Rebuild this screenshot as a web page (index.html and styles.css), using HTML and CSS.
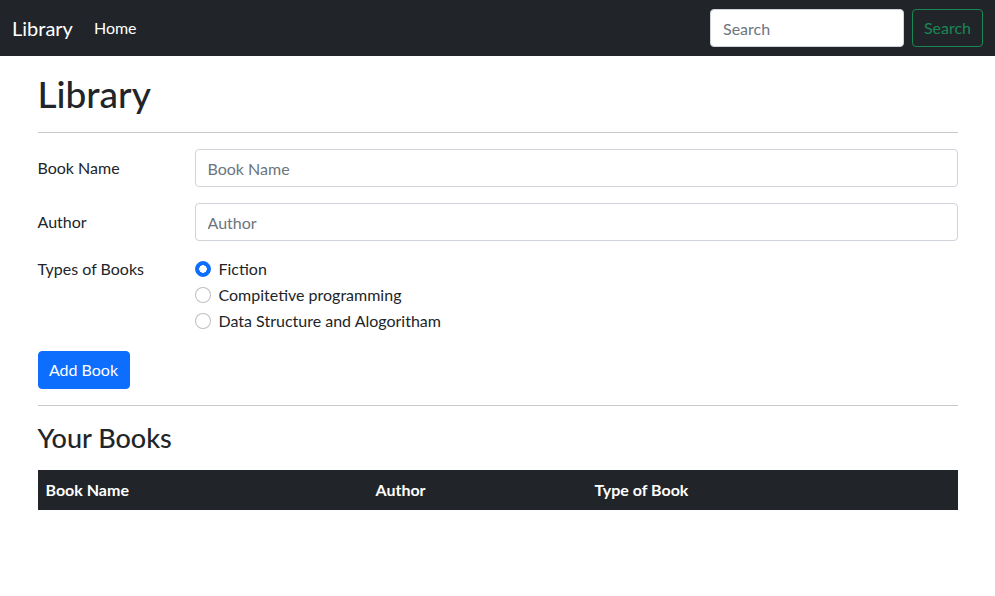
FILE: index.html
```html
<!DOCTYPE html>
<html lang="en">
<head>
<meta charset="utf-8">
<title>Library</title>
<link rel="stylesheet" href="styles.css">
</head>
<body>
<nav class="navbar">
  <div class="nav-left">
    <a class="brand" href="#">Library</a>
    <a class="nav-link" href="#">Home</a>
  </div>
  <form class="nav-search">
    <input class="search-input" type="search" placeholder="Search">
    <button class="btn-outline-success" type="button">Search</button>
  </form>
</nav>

<main class="container">
  <h1 class="title">Library</h1>
  <hr class="divider">
  <form class="book-form">
    <div class="form-row">
      <label class="form-label" for="bookName">Book Name</label>
      <div class="form-field"><input id="bookName" class="form-control" type="text" placeholder="Book Name"></div>
    </div>
    <div class="form-row">
      <label class="form-label" for="author">Author</label>
      <div class="form-field"><input id="author" class="form-control" type="text" placeholder="Author"></div>
    </div>
    <div class="form-row radios-row">
      <div class="form-label legend">Types of Books</div>
      <div class="form-field">
        <label class="form-check"><input class="radio" type="radio" name="type" checked><span>Fiction</span></label>
        <label class="form-check"><input class="radio" type="radio" name="type"><span>Compitetive programming</span></label>
        <label class="form-check"><input class="radio" type="radio" name="type"><span>Data Structure and Alogoritham</span></label>
      </div>
    </div>
    <button class="btn-primary" type="button">Add Book</button>
  </form>
  <hr class="divider">
  <h2 class="subtitle">Your Books</h2>
  <table class="books-table">
    <thead>
      <tr>
        <th class="col-name">Book Name</th>
        <th class="col-author">Author</th>
        <th class="col-type">Type of Book</th>
      </tr>
    </thead>
    <tbody></tbody>
  </table>
</main>
</body>
</html>
```

FILE: styles.css
```css
* { box-sizing: border-box; }

html, body {
  margin: 0;
  padding: 0;
  background: #fff;
}

body {
  font-family: Lato, "Noto Sans", "Liberation Sans", sans-serif;
  font-size: 16px;
  line-height: 24px;
  color: #212529;
}

.navbar {
  height: 56px;
  background: #212529;
  display: flex;
  align-items: center;
  justify-content: space-between;
  padding: 0 12px;
}

.nav-left {
  display: flex;
  align-items: center;
}

.brand {
  color: #fff;
  text-decoration: none;
  font-size: 20px;
  line-height: 30px;
  margin-right: 13px;
}

.nav-link {
  color: #fff;
  text-decoration: none;
  padding: 8px;
  font-size: 16px;
}

.nav-search {
  display: flex;
  align-items: center;
  gap: 8px;
  margin: 0;
}

.search-input {
  width: 194px;
  height: 38px;
  border: 1px solid #ced4da;
  border-radius: 4px;
  padding: 6px 12px;
  font: inherit;
  color: #212529;
  background: #fff;
  outline: none;
}

.search-input::placeholder,
.form-control::placeholder {
  color: #6c757d;
}

.btn-outline-success {
  width: 71px;
  height: 38px;
  padding: 6px 0;
  border: 1px solid #198754;
  border-radius: 4px;
  background: transparent;
  color: #198754;
  font: inherit;
  text-align: center;
}

.container {
  width: 920px;
  margin: 0 auto;
  padding-top: 16px;
}

.title {
  margin: 0;
  font-size: 37px;
  line-height: 44px;
  font-weight: 500;
}

.divider {
  margin: 16px 0;
  border: 0;
  border-top: 1px solid #c8c9ca;
  height: 0;
}

.book-form {
  margin: 0;
}

.form-row {
  display: flex;
  margin-bottom: 16px;
}

.form-label {
  width: 157px;
  padding-top: 7px;
  flex-shrink: 0;
}

.legend {
  padding-top: 0;
}

.form-field {
  flex: 1;
}

.form-control {
  display: block;
  width: 100%;
  height: 38px;
  padding: 6px 12px;
  border: 1px solid #ced4da;
  border-radius: 4px;
  font: inherit;
  color: #212529;
  background: #fff;
  outline: none;
}

.form-check {
  display: flex;
  align-items: center;
  min-height: 24px;
  margin-bottom: 2px;
}

.radio {
  appearance: none;
  -webkit-appearance: none;
  width: 16px;
  height: 16px;
  margin: 0 8px 0 0;
  border: 1px solid rgba(0, 0, 0, 0.25);
  border-radius: 50%;
  background: #fff;
  flex-shrink: 0;
}

.radio:checked {
  border-color: #0d6efd;
  background: radial-gradient(circle, #fff 0, #fff 3.5px, #0d6efd 4px);
}

.btn-primary {
  display: block;
  width: 92px;
  height: 38px;
  padding: 6px 0;
  border: 1px solid #0d6efd;
  border-radius: 4px;
  background: #0d6efd;
  color: #fff;
  font: inherit;
  text-align: center;
}

.subtitle {
  margin: 0 0 16px;
  font-size: 27px;
  line-height: 32px;
  font-weight: 500;
}

.books-table {
  width: 100%;
  border-collapse: collapse;
}

.books-table th {
  background: #212529;
  color: #fff;
  text-align: left;
  font-weight: 700;
  padding: 8px;
  line-height: 24px;
}

.col-name { width: 330px; }
.col-author { width: 219px; }
```
